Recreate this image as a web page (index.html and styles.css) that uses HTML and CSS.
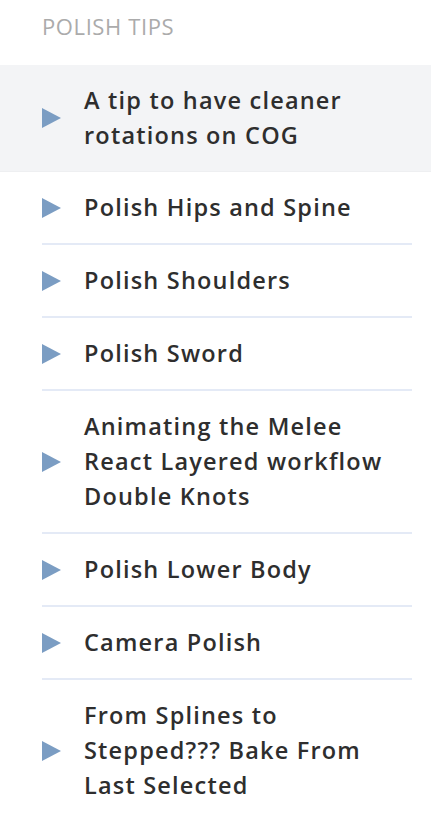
FILE: index.html
```html
<!DOCTYPE html>
<html>
<head>
<meta charset="utf-8">
<link rel="stylesheet" href="styles.css">
</head>
<body>
<div class="panel">
  <h2 class="title">POLISH TIPS</h2>
  <ul class="list">
    <li class="item active"><span class="arrow"></span><span class="label">A tip to have cleaner rotations on COG</span></li>
    <li class="item"><span class="arrow"></span><span class="label">Polish Hips and Spine</span></li>
    <li class="item"><span class="arrow"></span><span class="label">Polish Shoulders</span></li>
    <li class="item"><span class="arrow"></span><span class="label">Polish Sword</span></li>
    <li class="item"><span class="arrow"></span><span class="label">Animating the Melee React Layered workflow Double Knots</span></li>
    <li class="item"><span class="arrow"></span><span class="label">Polish Lower Body</span></li>
    <li class="item"><span class="arrow"></span><span class="label">Camera Polish</span></li>
    <li class="item last"><span class="arrow"></span><span class="label">From Splines to Stepped??? Bake From Last Selected</span></li>
  </ul>
</div>
</body>
</html>
```
FILE: styles.css
```css
html, body {
  margin: 0;
  padding: 0;
  background: #ffffff;
}
body {
  font-family: "Open Sans", "Liberation Sans", sans-serif;
}
.panel {
  padding-top: 9px;
}
.title {
  margin: 0 0 21px 42px;
  font-size: 22px;
  line-height: 35px;
  font-weight: 500;
  letter-spacing: 0.6px;
  color: #ababab;
}
.list {
  list-style: none;
  margin: 0;
  padding: 0;
}
.item {
  display: flex;
  align-items: center;
  margin: 0 19px 0 42px;
  padding: 18px 0;
  border-bottom: 2px solid #e4eaf6;
}
.item.active {
  margin: 0;
  padding: 18px 19px 18px 42px;
  background: #f3f4f6;
  border-bottom: 1px solid #eeeff1;
}
.item.last {
  border-bottom: none;
}
.arrow {
  flex: none;
  width: 0;
  height: 0;
  border-top: 10px solid transparent;
  border-bottom: 10px solid transparent;
  border-left: 19px solid #7b9dc3;
  margin-right: 23px;
}
.label {
  max-width: 318px;
  font-size: 23.5px;
  line-height: 35px;
  font-weight: 600;
  letter-spacing: 1.2px;
  color: #2e2e2e;
}
```
